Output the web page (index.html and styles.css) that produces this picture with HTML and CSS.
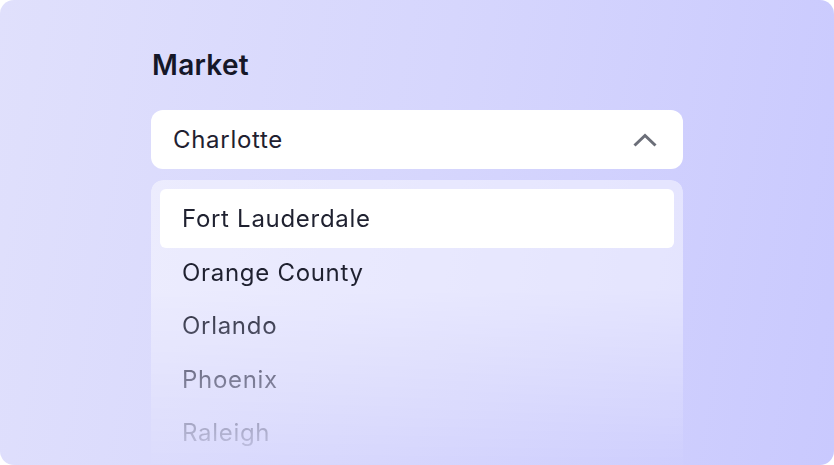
FILE: index.html
```html
<!DOCTYPE html>
<html lang="en">
<head>
<meta charset="utf-8">
<link rel="stylesheet" href="styles.css">
</head>
<body>
<div class="card">
  <div class="field">
    <div class="label">Market</div>
    <div class="select">
      <span class="value">Charlotte</span>
      <svg class="chev" width="26" height="16" viewBox="0 0 26 16"><path d="M2.5 13.5 L13 3.5 L23.5 13.5" fill="none" stroke="#6b6e78" stroke-width="3"/></svg>
    </div>
    <ul class="panel">
      <li class="item active">Fort Lauderdale</li>
      <li class="item">Orange County</li>
      <li class="item">Orlando</li>
      <li class="item">Phoenix</li>
      <li class="item">Raleigh</li>
    </ul>
  </div>
</div>
</body>
</html>
```

FILE: styles.css
```css
html, body {
  margin: 0;
  padding: 0;
  background: #ffffff;
}
body {
  font-family: Inter, "Noto Sans", sans-serif;
}
.card {
  width: 834px;
  height: 465px;
  box-sizing: border-box;
  border-radius: 14px;
  overflow: hidden;
  background: linear-gradient(100deg, #e0e0fc 0%, #d6d6fd 50%, #c9c9fe 100%);
  padding: 48px 0 0 151px;
}
.field {
  width: 532px;
  display: flex;
  flex-direction: column;
}
.label {
  font-size: 28px;
  line-height: 34px;
  font-weight: 600;
  letter-spacing: 0.3px;
  color: #151728;
  padding-left: 1px;
  margin-bottom: 28px;
}
.select {
  height: 59px;
  background: #ffffff;
  border-radius: 12px;
  display: flex;
  align-items: center;
  justify-content: space-between;
  padding: 0 25px 0 22px;
  box-sizing: border-box;
}
.value {
  font-size: 24px;
  letter-spacing: 0.7px;
  color: #1f2130;
}
.chev {
  display: block;
}
.panel {
  list-style: none;
  margin: 11px 0 0 0;
  padding: 9px;
  height: 320px;
  box-sizing: border-box;
  border-radius: 12px;
  background: rgba(255, 255, 255, 0.45);
  -webkit-mask-image: linear-gradient(to bottom, #000 110px, rgba(0,0,0,0.05) 285px);
  mask-image: linear-gradient(to bottom, #000 110px, rgba(0,0,0,0.05) 285px);
}
.item {
  height: 59px;
  display: flex;
  align-items: center;
  padding-left: 22px;
  font-size: 24px;
  letter-spacing: 0.7px;
  color: #1f2130;
  border-radius: 6px;
}
.item + .item {
  margin-top: -5.5px;
}
.item.active {
  background: #ffffff;
}
```
